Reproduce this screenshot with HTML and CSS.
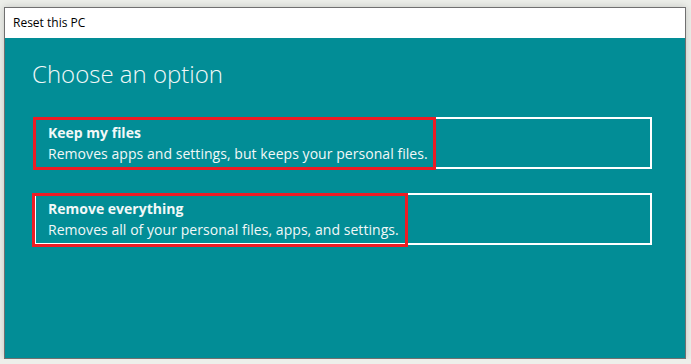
FILE: index.html
```html
<!DOCTYPE html>
<html lang="en">
<head>
  <meta charset="UTF-8" />
  <meta name="viewport" content="width=device-width, initial-scale=1.0"/>
  <title>Reset this PC</title>
  <link rel="stylesheet" href="styles.css">
</head>
<body>
  <div class="window">
    <div class="titlebar">Reset this PC</div>
    <div class="content">
      <h1>Choose an option</h1>
      <div class="option">
        <div class="mark mark-keep"></div>
        <div class="option-title">Keep my files</div>
        <div class="option-desc">Removes apps and settings, but keeps your personal files.</div>
      </div>
      <div class="option">
        <div class="mark mark-remove"></div>
        <div class="option-title">Remove everything</div>
        <div class="option-desc">Removes all of your personal files, apps, and settings.</div>
      </div>
    </div>
  </div>
</body>
</html>
```

FILE: styles.css
```css
body {
  margin: 0;
  padding: 7px 0 0 4px;
  background-color: #edefea;
  font-family: "Open Sans", "Noto Sans", sans-serif;
}
.window {
  width: 680px;
  height: 350px;
  border: 1px solid #707070;
  background-color: #028d96;
  box-shadow: 0 0 8px rgba(0,0,0,0.18);
}
.titlebar {
  height: 30px;
  line-height: 30px;
  padding-left: 8px;
  background-color: white;
  color: #000;
  font-size: 12px;
}
.content {
  padding: 20px 33px 0 29px;
  color: #f2f8f8;
}
h1 {
  margin: 0 0 27px -2px;
  font-size: 24px;
  line-height: 32px;
  font-weight: 300;
}
.option {
  position: relative;
  height: 45px;
  padding: 3px 0 0 12px;
  border: 2px solid white;
  margin-bottom: 24px;
}
.option-title {
  font-size: 14px;
  line-height: 21px;
  font-weight: 700;
}
.option-desc {
  font-size: 14px;
  line-height: 21px;
  letter-spacing: 0.05px;
}
.mark {
  position: absolute;
  border: 3px solid #ed1c24;
  box-sizing: border-box;
}
.mark-keep {
  left: -3px;
  top: -2px;
  width: 403px;
  height: 53px;
}
.mark-remove {
  left: -4px;
  top: -2px;
  width: 376px;
  height: 54px;
}
```
